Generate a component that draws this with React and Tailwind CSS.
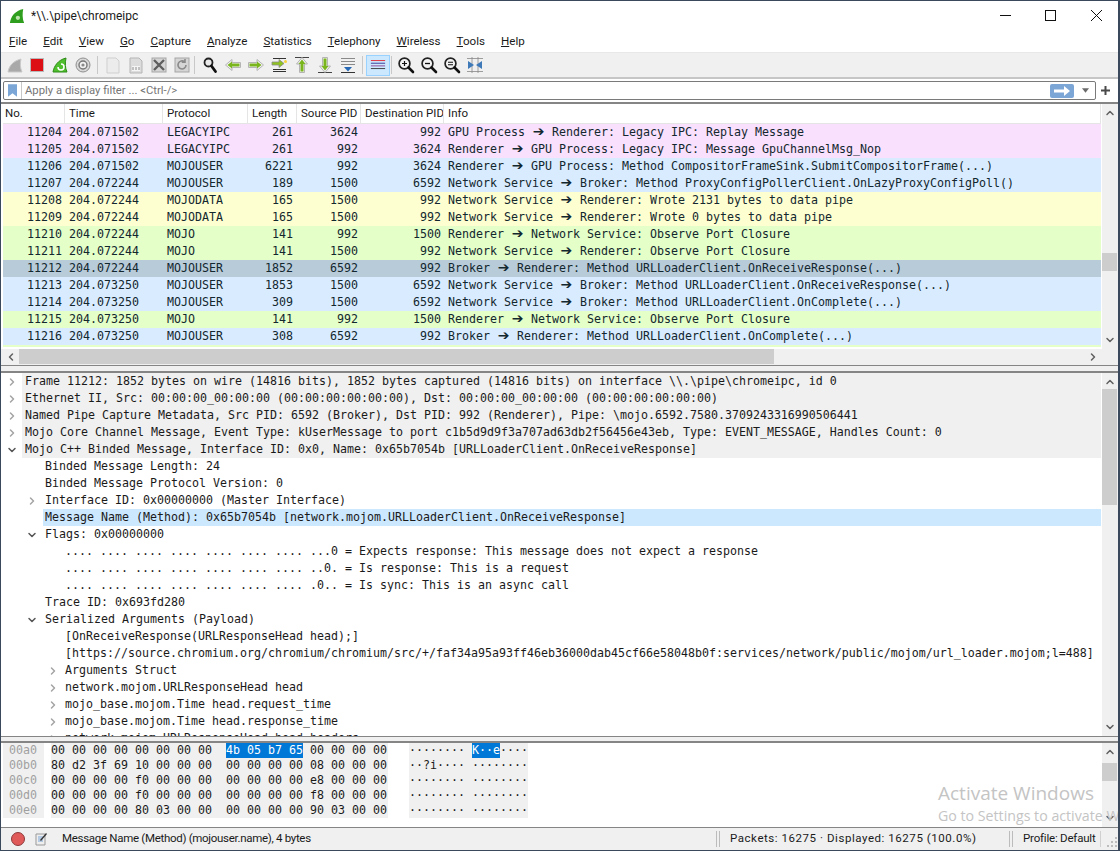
import React from 'react';
import { ChevronRight, ChevronDown, ChevronUp, ChevronLeft } from 'lucide-react';

const ui = { fontFamily: 'Roboto, "Noto Sans", sans-serif' };

const packets = [
  ['11204', '204.071502', 'LEGACYIPC', '261', '3624', '992', 'GPU Process ➔ Renderer: Legacy IPC: Replay Message', 'pink'],
  ['11205', '204.071502', 'LEGACYIPC', '261', '992', '3624', 'Renderer ➔ GPU Process: Legacy IPC: Message GpuChannelMsg_Nop', 'pink'],
  ['11206', '204.071502', 'MOJOUSER', '6221', '992', '3624', 'Renderer ➔ GPU Process: Method CompositorFrameSink.SubmitCompositorFrame(...)', 'blue'],
  ['11207', '204.072244', 'MOJOUSER', '189', '1500', '6592', 'Network Service ➔ Broker: Method ProxyConfigPollerClient.OnLazyProxyConfigPoll()', 'blue'],
  ['11208', '204.072244', 'MOJODATA', '165', '1500', '992', 'Network Service ➔ Renderer: Wrote 2131 bytes to data pipe', 'yellow'],
  ['11209', '204.072244', 'MOJODATA', '165', '1500', '992', 'Network Service ➔ Renderer: Wrote 0 bytes to data pipe', 'yellow'],
  ['11210', '204.072244', 'MOJO', '141', '992', '1500', 'Renderer ➔ Network Service: Observe Port Closure', 'green'],
  ['11211', '204.072244', 'MOJO', '141', '1500', '992', 'Network Service ➔ Renderer: Observe Port Closure', 'green'],
  ['11212', '204.072244', 'MOJOUSER', '1852', '6592', '992', 'Broker ➔ Renderer: Method URLLoaderClient.OnReceiveResponse(...)', 'selected'],
  ['11213', '204.073250', 'MOJOUSER', '1853', '1500', '6592', 'Network Service ➔ Broker: Method URLLoaderClient.OnReceiveResponse(...)', 'blue'],
  ['11214', '204.073250', 'MOJOUSER', '309', '1500', '6592', 'Network Service ➔ Broker: Method URLLoaderClient.OnComplete(...)', 'blue'],
  ['11215', '204.073250', 'MOJO', '141', '992', '1500', 'Renderer ➔ Network Service: Observe Port Closure', 'green'],
  ['11216', '204.073250', 'MOJOUSER', '308', '6592', '992', 'Broker ➔ Renderer: Method URLLoaderClient.OnComplete(...)', 'blue'],
];

const rowColors = {
  pink: 'bg-[#f9e0fc]',
  blue: 'bg-[#d9ecff]',
  yellow: 'bg-[#feffd0]',
  green: 'bg-[#e4ffc7]',
  selected: 'bg-[#b8cbd9]',
};

const details = [
  [0, 'closed', 'Frame 11212: 1852 bytes on wire (14816 bits), 1852 bytes captured (14816 bits) on interface \\\\.\\pipe\\chromeipc, id 0', 'top'],
  [0, 'closed', 'Ethernet II, Src: 00:00:00_00:00:00 (00:00:00:00:00:00), Dst: 00:00:00_00:00:00 (00:00:00:00:00:00)', 'top'],
  [0, 'closed', 'Named Pipe Capture Metadata, Src PID: 6592 (Broker), Dst PID: 992 (Renderer), Pipe: \\mojo.6592.7580.3709243316990506441', 'top'],
  [0, 'closed', 'Mojo Core Channel Message, Event Type: kUserMessage to port c1b5d9d9f3a707ad63db2f56456e43eb, Type: EVENT_MESSAGE, Handles Count: 0', 'top'],
  [0, 'open', 'Mojo C++ Binded Message, Interface ID: 0x0, Name: 0x65b7054b [URLLoaderClient.OnReceiveResponse]', 'top'],
  [1, null, 'Binded Message Length: 24'],
  [1, null, 'Binded Message Protocol Version: 0'],
  [1, 'closed', 'Interface ID: 0x00000000 (Master Interface)'],
  [1, null, 'Message Name (Method): 0x65b7054b [network.mojom.URLLoaderClient.OnReceiveResponse]', 'sel'],
  [1, 'open', 'Flags: 0x00000000'],
  [2, null, '.... .... .... .... .... .... .... ...0 = Expects response: This message does not expect a response'],
  [2, null, '.... .... .... .... .... .... .... ..0. = Is response: This is a request'],
  [2, null, '.... .... .... .... .... .... .... .0.. = Is sync: This is an async call'],
  [1, null, 'Trace ID: 0x693fd280'],
  [1, 'open', 'Serialized Arguments (Payload)'],
  [2, null, '[OnReceiveResponse(URLResponseHead head);]'],
  [2, null, '[https://source.chromium.org/chromium/chromium/src/+/faf34a95a93ff46eb36000dab45cf66e58048b0f:services/network/public/mojom/url_loader.mojom;l=488]'],
  [2, 'closed', 'Arguments Struct'],
  [2, 'closed', 'network.mojom.URLResponseHead head'],
  [2, 'closed', 'mojo_base.mojom.Time head.request_time'],
  [2, 'closed', 'mojo_base.mojom.Time head.response_time'],
  [2, 'closed', 'network.mojom.URLResponseHead head.headers'],
];

const hexRows = [
  ['00a0', '00 00 00 00 00 00 00 00', '00 00 00 00', '········'],
  ['00b0', '80 d2 3f 69 10 00 00 00', '00 00 00 00 08 00 00 00', '··?i···· ········'],
  ['00c0', '00 00 00 00 f0 00 00 00', '00 00 00 00 e8 00 00 00', '········ ········'],
  ['00d0', '00 00 00 00 f0 00 00 00', '00 00 00 00 f8 00 00 00', '········ ········'],
  ['00e0', '00 00 00 00 80 03 00 00', '00 00 00 00 90 03 00 00', '········ ········'],
];

const menus = [
  ['F', 'ile'], ['E', 'dit'], ['V', 'iew'], ['G', 'o'], ['C', 'apture'], ['A', 'nalyze'],
  ['S', 'tatistics'], ['T', 'elephony'], ['W', 'ireless'], ['T', 'ools'], ['H', 'elp'],
];

const columns = [
  ['No.', 'w-[62px] pl-[2px]'],
  ['Time', 'w-[98px] pl-[4px]'],
  ['Protocol', 'w-[85px] pl-[4px]'],
  ['Length', 'w-[49px] pl-[4px]'],
  ['Source PID', 'w-[64px] pl-[4px]'],
  ['Destination PID', 'w-[83px] pl-[4px]'],
  ['Info', 'flex-1 pl-[4px]'],
];

const Icon = ({ children, className = '' }) => (
  <svg viewBox="0 0 18 18" className={`w-[18px] h-[18px] shrink-0 ${className}`}>{children}</svg>
);

const Magnifier = ({ sign }) => (
  <Icon>
    <circle cx="7.5" cy="7.5" r="5.4" fill="#f4f4f4" stroke="#222" strokeWidth="1.7" />
    <path d="M11.5 11.5l4.5 4.5" stroke="#111" strokeWidth="2.6" strokeLinecap="round" />
    {sign === 'plus' && <path d="M5 7.5h5M7.5 5v5" stroke="#111" strokeWidth="1.2" />}
    {sign === 'minus' && <path d="M5 7.5h5" stroke="#111" strokeWidth="1.3" />}
    {sign === 'equal' && <path d="M5 6.3h5M5 8.7h5" stroke="#111" strokeWidth="1.1" />}
  </Icon>
);

// outlined grey arrow with the green one inside, as in the go-to buttons
const Arrow = ({ rotate = 0, line }) => (
  <Icon>
    {line === 'top' && <path d="M2 1.5h14" stroke="#444" strokeWidth="1" />}
    {line === 'bottom' && <path d="M2 16.5h14" stroke="#444" strokeWidth="1" />}
    <g transform={`rotate(${rotate} 9 9)`}>
      <path d="M1.5 9l6.5-5.5v3h8.5v5H8v3z" fill="#f2f2f2" stroke="#b4b4b4" strokeWidth="1" strokeLinejoin="round" />
      <path d="M3.5 9l4.5-3.5v2h7.5v3H8v2z" fill="#7ab51d" />
    </g>
  </Icon>
);

const Sep = ({ className = '' }) => <div className={`w-px h-[18px] bg-[#c8c8c8] mr-px ${className}`} />;

const Toolbar = () => (
  <div className="h-[26px] bg-[#f0f0f0] border-b-2 border-[#c6c6c6] flex items-center pl-[5px] gap-[5px] shrink-0">
    <Icon>
      <path d="M2 16C3 10 7 5 15 3c-1 4-1 9 1 13z" fill="#a9a9a9" stroke="#c9c9c9" />
    </Icon>
    <Icon className="-ml-px">
      <rect x="2.5" y="2.5" width="13" height="13" fill="#dc0f14" stroke="#b9b9b9" />
    </Icon>
    <Icon>
      <path d="M2 16C3 10 7 4 15 2c-1 5-1 10 1 14z" fill="#4fbf2d" stroke="#2d8a18" />
      <path d="M7 11a3 3 0 1 0 3-3" fill="none" stroke="#fff" strokeWidth="1.5" />
    </Icon>
    <Icon>
      <circle cx="9" cy="9" r="7" fill="#d8d8d8" stroke="#8f8f8f" />
      <circle cx="9" cy="9" r="4" fill="#f2f2f2" stroke="#777" strokeWidth="1.4" />
      <circle cx="9" cy="9" r="1.6" fill="#8a8a8a" />
    </Icon>
    <Sep />
    <Icon>
      <path d="M3 2h9l3 3v12H3z" fill="#ececec" stroke="#cfcfcf" />
    </Icon>
    <Icon>
      <path d="M3 2h9l3 3v12H3z" fill="#dcdcdc" stroke="#b5b5b5" />
      <path d="M5 10h8v5H5z" fill="#f5f5f5" />
      <path d="M6 11v3M9 11v3M12 11v3" stroke="#8c8c8c" strokeWidth="1" />
    </Icon>
    <Icon>
      <rect x="2" y="2" width="14" height="14" fill="#d5d5d5" stroke="#a5a5a5" />
      <path d="M4 4l10 10M14 4L4 14" stroke="#5f5f5f" strokeWidth="2.4" />
    </Icon>
    <Icon>
      <rect x="2" y="2" width="14" height="14" fill="#d5d5d5" stroke="#a5a5a5" />
      <path d="M13 9a4 4 0 1 1-1.5-3.2M12 3v3.2H8.8" fill="none" stroke="#8a8a8a" strokeWidth="1.6" />
    </Icon>
    <Sep className="-ml-[2px]" />
    <Icon>
      <circle cx="7.5" cy="6.5" r="4" fill="#eaeaea" stroke="#222" strokeWidth="1.8" />
      <path d="M10.5 10l4 5.5" stroke="#111" strokeWidth="2.8" strokeLinecap="round" />
    </Icon>
    <Arrow />
    <Arrow rotate={180} />
    <Icon>
      <path d="M3 2.5h13M3 13.5h13M3 15.5h13" stroke="#333" strokeWidth="1" />
      <path d="M2 9V6h7V3.5l5 4-5 4V9z" fill="#8fc31f" stroke="#8a8a8a" strokeWidth="0.8" />
      <circle cx="15.5" cy="5.5" r="1.5" fill="#f5d33c" />
    </Icon>
    <Arrow rotate={90} line="top" />
    <Arrow rotate={270} line="bottom" />
    <Icon>
      <path d="M2 2.5h14M2 5.5h14M2 8.5h14" stroke="#8a8a8a" strokeWidth="1" />
      <path d="M5 11h8l-4 4.5z" fill="#2467b4" />
      <path d="M2 16.5h14" stroke="#333" strokeWidth="1" />
    </Icon>
    <Sep />
    <div className="w-[24px] h-[21px] -mx-[3px] bg-[#cce8ff] border border-[#99d1ff] flex items-center justify-center shrink-0">
      <svg viewBox="0 0 18 14" className="w-[16px] h-[14px]">
        <path d="M1 2h16" stroke="#e0222a" strokeWidth="1" />
        <path d="M1 5h16" stroke="#2b2b8c" strokeWidth="1" />
        <path d="M1 8h16" stroke="#8a3b8c" strokeWidth="1" />
        <path d="M1 11h16" stroke="#333" strokeWidth="1" />
      </svg>
    </div>
    <div className="w-px h-[18px] bg-[#c8c8c8] -ml-px" />
    <Magnifier sign="plus" />
    <Magnifier sign="minus" />
    <Magnifier sign="equal" />
    <Icon>
      <path d="M1 2.5h16M1 15.5h16M6 1v16M12 1v16" stroke="#888" strokeWidth="0.8" />
      <path d="M2 5l6 4-6 4zM16 5l-6 4 6 4z" fill="#3f79b8" />
    </Icon>
  </div>
);

const FilterBar = () => (
  <div className="h-[23px] flex items-center pl-[2px] pr-[8px] gap-[5px] shrink-0">
    <div className="flex-1 h-[19px] border border-[#7a7a7a] rounded-[2px] bg-white flex items-center text-[11.3px] text-[#767676] pr-[3px]">
      <div className="w-[18px] h-full border-r border-[#c8c8c8] flex items-center justify-center shrink-0">
        <svg viewBox="0 0 10 14" className="w-[9px] h-[15px]">
          <path d="M0 0h10v14L5 10 0 14z" fill="#7ba6d6" />
        </svg>
      </div>
      <span className="pl-[3px] pt-px flex-1">Apply a display filter ... &lt;Ctrl-/&gt;</span>
      <div className="w-[24px] h-[14px] bg-[#7ba6d6] rounded-[2px] flex items-center justify-center">
        <svg viewBox="0 0 18 10" className="w-[18px] h-[10px]">
          <path d="M1 3.5h10V0l6 5-6 5V6.5H1z" fill="#fff" />
        </svg>
      </div>
      <svg viewBox="0 0 8 5" className="w-[7px] h-[5px] ml-[8px] mr-[3px]">
        <path d="M0 0h8L4 5z" fill="#6b6b6b" />
      </svg>
    </div>
    <svg viewBox="0 0 9 9" className="w-[9px] h-[9px]">
      <path d="M4.5 0v9M0 4.5h9" stroke="#4a4a4a" strokeWidth="2" />
    </svg>
  </div>
);

const Scrollbar = ({ thumbClass }) => (
  <div className="w-[16px] ml-px bg-[#f0f0f0] shrink-0 flex flex-col items-center justify-between relative">
    <ChevronUp size={12} strokeWidth={3} className="text-[#606060] mt-[3px]" />
    <div className={`absolute left-0 w-[15px] bg-[#cdcdcd] ${thumbClass}`} />
    <ChevronDown size={12} strokeWidth={3} className="text-[#606060] mb-[3px]" />
  </div>
);

// the arrow in the Info column is a heavy glyph about two cells wide
const InfoText = ({ text }) => {
  const [before, after] = text.split(' ➔ ');
  return (
    <>
      {before}{' '}
      <span className="inline-block w-[13px] text-center font-['DejaVu_Sans',sans-serif] font-bold text-[14px] leading-[14px]">➔</span>
      {' '}{after}
    </>
  );
};

const PacketList = () => (
  <div className="h-[264px] flex flex-col border-t-2 border-b border-[#858585] overflow-hidden shrink-0">
    <div className="flex h-[245px] pl-[2px]">
      <div className="flex-1 min-w-0 overflow-hidden">
        <div className="flex h-[20px] text-[11.5px] text-[#1a1a1a] border-b border-[#e5e5e5]">
          {columns.map(([label, width]) => (
            <div key={label} className={`${width} shrink-0 pt-px border-r border-[#e5e5e5] flex items-center whitespace-nowrap overflow-hidden`}>
              {label}
            </div>
          ))}
        </div>
        <div className="font-['DejaVu_Sans_Mono',monospace] text-[11.63px] text-[#12272e]">
          {packets.map((p) => (
            <div key={p[0]} className={`flex h-[17px] leading-[17px] whitespace-pre ${rowColors[p[7]]}`}>
              <div className="w-[59px] text-right">{p[0]}</div>
              <div className="w-[98px] pl-[7px] box-content -mr-[4px]">{p[1]}</div>
              <div className="w-[81px] pl-[4px]">{p[2]}</div>
              <div className="w-[49px] text-right">{p[3]}</div>
              <div className="w-[65px] text-right">{p[4]}</div>
              <div className="w-[83px] text-right">{p[5]}</div>
              <div className="flex-1 pl-[7px]"><InfoText text={p[6]} /></div>
            </div>
          ))}
          <div className="h-[2px] bg-[#e4ffc7]" />
        </div>
      </div>
      <Scrollbar thumbClass="top-[149px] h-[18px]" />
    </div>
    <div className="h-[16px] flex bg-[#f0f0f0] shrink-0 pl-[2px]">
      <div className="w-[16px] flex items-center justify-center">
        <ChevronLeft size={12} strokeWidth={3} className="text-[#606060]" />
      </div>
      <div className="w-[755px] bg-[#cdcdcd] h-[15px]" />
      <div className="flex-1 flex items-center justify-end pr-[19px]">
        <ChevronRight size={12} strokeWidth={3} className="text-[#606060]" />
      </div>
    </div>
  </div>
);

const Chevron = ({ state }) => {
  if (state === 'closed') return <ChevronRight size={12} strokeWidth={3} className="text-[#a4a4a4]" />;
  if (state === 'open') return <ChevronDown size={12} strokeWidth={3} className="text-[#555]" />;
  return null;
};

const indents = ['w-[19px] pl-[3px]', 'w-[40px] pl-[23px]', 'w-[60px] pl-[44px]'];
const textPads = ['pl-[3px]', 'pl-[2px]', 'pl-[2px]'];

const DetailTree = () => (
  <div className="h-[366px] flex border-t-2 border-b border-[#858585] pl-[2px] overflow-hidden shrink-0">
    <div className="flex-1 min-w-0 overflow-hidden font-['DejaVu_Sans_Mono',monospace] text-[11.63px] text-[#1a1a1a]">
      {details.map(([level, state, text, kind], i) => (
        <div key={i} className="flex h-[17px] leading-[17px] whitespace-pre">
          <div className={`${indents[level]} shrink-0 flex items-center`}>
            <Chevron state={state} />
          </div>
          <div className={`flex-1 ${textPads[level]} ${kind === 'top' ? 'bg-[#f0f0f0]' : ''} ${kind === 'sel' ? 'bg-[#cce8ff]' : ''}`}>{text}</div>
        </div>
      ))}
    </div>
    <Scrollbar thumbClass="top-[16px] h-[116px]" />
  </div>
);

const HexDump = () => (
  <div className="h-[86px] flex border-t-2 border-[#858585] pl-[2px] overflow-hidden relative shrink-0">
    <div className="flex-1 min-w-0 font-['DejaVu_Sans_Mono',monospace] text-[11.63px] text-[#1a1a1a]">
      {hexRows.map((r, i) => (
        <div key={r[0]} className="flex h-[15px] leading-[15px] whitespace-pre">
          <div className="w-[41px] bg-[#f0f0f0] text-[#a0a0a0] pl-[6px] shrink-0">{r[0]}</div>
          <div className="w-[7px]" />
          <div className="w-[337px] bg-[#f0f0f0] shrink-0">
            {i === 0 ? (
              <>
                {r[1]}{'  '}<span className="inline-block bg-[#0078d7] text-white">4b 05 b7 65</span> {r[2]}
              </>
            ) : (
              <>{r[1]}{'  '}{r[2]}</>
            )}
          </div>
          <div className="w-[21px]" />
          <div className="w-[119px] bg-[#f0f0f0] shrink-0">
            {i === 0 ? (
              <>
                {r[3]} <span className="inline-block bg-[#0078d7] text-white">K··e</span>····
              </>
            ) : r[3]}
          </div>
        </div>
      ))}
    </div>
    <Scrollbar thumbClass="top-[20px] h-[18px]" />
    {/* Windows activation watermark sits above the scrollbar */}
    <div className="absolute z-10 left-[937px] top-[38px] font-['Open_Sans',sans-serif] text-[19px] leading-[24px] text-[#c4c4c4] whitespace-nowrap">Activate Windows</div>
    <div className="absolute z-10 left-[937px] top-[64px] font-['Open_Sans',sans-serif] text-[14.2px] leading-[18px] text-[#c4c4c4] whitespace-nowrap">Go to Settings to activate W</div>
  </div>
);

const StatusBar = () => (
  <div className="flex-1 border-t border-[#858585] bg-[#f0f0f0] flex items-center text-[11.5px] text-[#1a1a1a] whitespace-nowrap">
    <div className="w-[10px]" />
    <svg viewBox="0 0 14 14" className="w-[14px] h-[14px] shrink-0">
      <circle cx="7" cy="7" r="6.5" fill="#e05a5a" stroke="#8d3a3a" />
    </svg>
    <svg viewBox="0 0 14 14" className="w-[14px] h-[14px] shrink-0 ml-[9px]">
      <path d="M2 2h9v11H2z" fill="#eee" stroke="#999" />
      <path d="M4 5h5M4 7h5M4 9h5" stroke="#7ba6d6" />
      <path d="M6 8l6-7 1 1-6 7z" fill="#333" />
    </svg>
    <span className="ml-[14px] flex-1 tracking-[-0.3px]">Message Name (Method) (mojouser.name), 4 bytes</span>
    <div className="w-[4px] h-[16px] border-x border-[#bcbcbc] mr-[10px]" />
    <span className="w-[279px] tracking-[0.55px]">Packets: 16275 · Displayed: 16275 (100.0%)</span>
    <div className="w-[4px] h-[16px] border-x border-[#bcbcbc] mr-[10px]" />
    <span className="w-[77px] tracking-[-0.2px]">Profile: Default</span>
    <div className="w-px h-[16px] bg-[#d0d0d0]" />
    <svg viewBox="0 0 12 12" className="w-[12px] h-[12px] ml-[5px] self-end mb-[2px]">
      <path d="M9 9h2v2H9zM5 9h2v2H5zM1 9h2v2H1zM9 5h2v2H9zM5 5h2v2H5zM9 1h2v2H9z" fill="#bdbdbd" />
    </svg>
  </div>
);

const App = () => (
  <div className="w-[1120px] h-[851px] bg-white border-l border-r-2 border-b border-[#3a4a5c] overflow-hidden flex flex-col" style={ui}>
    {/* Title bar */}
    <div className="h-[30px] flex items-center shrink-0 border-t border-[#3a4a5c]">
      <svg viewBox="0 0 18 18" className="w-[16px] h-[16px] ml-[8px]">
        <path d="M1 17C2 9 7 3 16 1c-1 5-1 11 1 16z" fill="#2f9e1e" />
        <circle cx="10" cy="11" r="2.4" fill="#bfe6b0" />
      </svg>
      <span className="ml-[6px] text-[12px] text-[#1a1a1a]">*\\.\pipe\chromeipc</span>
      <div className="flex-1" />
      <svg viewBox="0 0 11 11" className="w-[11px] h-[11px] mr-[34px]"><path d="M0 5.5h11" stroke="#111" /></svg>
      <svg viewBox="0 0 11 11" className="w-[11px] h-[11px] mr-[35px]"><rect x="0.5" y="0.5" width="10" height="10" fill="none" stroke="#111" /></svg>
      <svg viewBox="0 0 11 11" className="w-[11px] h-[11px] mr-[16px]"><path d="M0 0l11 11M11 0L0 11" stroke="#111" /></svg>
    </div>

    {/* Menu bar */}
    <div className="h-[23px] flex items-center gap-[16px] pl-[8px] pt-[1px] text-[11.6px] text-[#1a1a1a] border-b border-[#e8e8e8] shrink-0">
      {menus.map(([key, rest], i) => (
        <span key={i}><span className="underline">{key}</span>{rest}</span>
      ))}
    </div>

    <Toolbar />
    <FilterBar />
    <PacketList />
    <div className="h-[5px] bg-[#f0f0f0] shrink-0" />
    <DetailTree />
    <div className="h-[4px] bg-[#f0f0f0] shrink-0" />
    <HexDump />
    <StatusBar />
  </div>
);

export default App;
